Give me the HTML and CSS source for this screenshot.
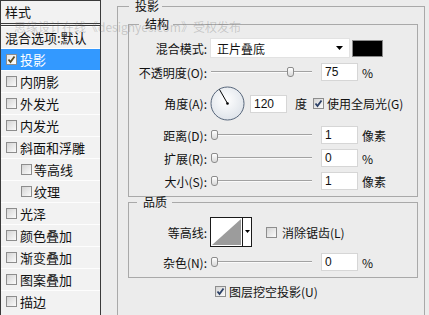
FILE: index.html
```html
<!DOCTYPE html>
<html lang="zh-CN">
<head>
<meta charset="utf-8">
<title>图层样式</title>
<link rel="stylesheet" href="styles.css">
</head>
<body>
<div class="dialog">
  <aside class="styles-list">
    <div class="list-head">样式</div>
    <div class="list-item plain">混合选项:默认</div>
    <div class="list-item selected"><span class="cb"><svg width="9" height="9" viewBox="0 0 9 9"><path d="M1.5 4.5 L3.5 7 L7.5 1.5" fill="none" stroke="#5a4a20" stroke-width="1.8"/></svg></span>投影</div>
    <div class="list-item"><span class="cb"></span>内阴影</div>
    <div class="list-item"><span class="cb"></span>外发光</div>
    <div class="list-item"><span class="cb"></span>内发光</div>
    <div class="list-item"><span class="cb"></span>斜面和浮雕</div>
    <div class="list-item sub"><span class="cb"></span>等高线</div>
    <div class="list-item sub"><span class="cb"></span>纹理</div>
    <div class="list-item"><span class="cb"></span>光泽</div>
    <div class="list-item"><span class="cb"></span>颜色叠加</div>
    <div class="list-item"><span class="cb"></span>渐变叠加</div>
    <div class="list-item"><span class="cb"></span>图案叠加</div>
    <div class="list-item"><span class="cb"></span>描边</div>
  </aside>

  <main class="panel">
    <fieldset class="group outer">
      <legend>投影</legend>

      <fieldset class="group inner structure">
        <legend>结构</legend>
        <div class="rows">
          <div class="row">
            <span class="lbl">混合模式:</span>
            <div class="select"><span>正片叠底</span><svg width="7" height="4" viewBox="0 0 7 4"><path d="M0 0 H7 L3.5 4 Z" fill="#000"/></svg></div>
            <span class="swatch"></span>
          </div>
          <div class="row">
            <span class="lbl">不透明度(O):</span>
            <div class="slider"><span class="track fill" style="width:75%"></span><span class="thumb"></span><span class="track rest"></span></div>
            <span class="num">75</span>
            <span class="unit">%</span>
          </div>
          <div class="row">
            <span class="lbl">角度(A):</span>
            <svg class="dial" width="35" height="35" viewBox="0 0 35 35">
              <defs>
                <radialGradient id="dialfill" cx="45%" cy="40%" r="60%">
                  <stop offset="0" stop-color="#ffffff"/>
                  <stop offset="1" stop-color="#dfe4ea"/>
                </radialGradient>
              </defs>
              <circle cx="17.5" cy="17.5" r="16.5" fill="url(#dialfill)" stroke="#56657a" stroke-width="1"/>
              <line x1="17.5" y1="17.5" x2="9.5" y2="3.5" stroke="#000" stroke-width="1"/>
              <circle cx="17.5" cy="17.5" r="1.3" fill="#000"/>
            </svg>
            <span class="num angle">120</span>
            <span class="deg">度</span>
            <span class="cb global"><svg width="9" height="9" viewBox="0 0 9 9"><path d="M1.5 4.5 L3.5 7 L7.5 1.5" fill="none" stroke="#2a3f66" stroke-width="1.8"/></svg></span>
            <span class="check-label">使用全局光(G)</span>
          </div>
          <div class="row">
            <span class="lbl">距离(D):</span>
            <div class="slider"><span class="track fill" style="width:0%"></span><span class="thumb"></span><span class="track rest"></span></div>
            <span class="num">1</span>
            <span class="unit">像素</span>
          </div>
          <div class="row">
            <span class="lbl">扩展(R):</span>
            <div class="slider"><span class="track fill" style="width:0%"></span><span class="thumb"></span><span class="track rest"></span></div>
            <span class="num">0</span>
            <span class="unit">%</span>
          </div>
          <div class="row">
            <span class="lbl">大小(S):</span>
            <div class="slider"><span class="track fill" style="width:0%"></span><span class="thumb"></span><span class="track rest"></span></div>
            <span class="num">1</span>
            <span class="unit">像素</span>
          </div>
        </div>
      </fieldset>

      <fieldset class="group inner quality">
        <legend>品质</legend>
        <div class="rows">
          <div class="row">
            <span class="lbl">等高线:</span>
            <svg class="contour" width="42" height="30" viewBox="0 0 42 30">
              <rect x="0.5" y="0.5" width="41" height="29" fill="#fff" stroke="#1a1a1a"/>
              <path d="M2 28 L31 2 L31 28 Z" fill="#9c9c9c"/>
              <line x1="32.5" y1="1" x2="32.5" y2="29" stroke="#1a1a1a"/>
              <path d="M35 13 H40 L37.5 16 Z" fill="#000"/>
            </svg>
            <span class="cb anti"></span>
            <span class="check-label anti-label">消除锯齿(L)</span>
          </div>
          <div class="row">
            <span class="lbl">杂色(N):</span>
            <div class="slider"><span class="track fill" style="width:0%"></span><span class="thumb"></span><span class="track rest"></span></div>
            <span class="num">0</span>
            <span class="unit">%</span>
          </div>
        </div>
      </fieldset>

      <div class="knockout">
        <span class="cb"><svg width="9" height="9" viewBox="0 0 9 9"><path d="M1.5 4.5 L3.5 7 L7.5 1.5" fill="none" stroke="#2a3f66" stroke-width="1.8"/></svg></span>
        <span class="check-label">图层挖空投影(U)</span>
      </div>
    </fieldset>
  </main>
</div>
<div class="watermark">思缘设计在线《designyes.com》受权发布</div>
</body>
</html>
```

FILE: styles.css
```css
* {
  box-sizing: border-box;
}

html,
body {
  margin: 0;
  padding: 0;
}

body {
  width: 429px;
  height: 315px;
  overflow: hidden;
  position: relative;
  background: #ececec;
  color: #111;
  font-family: "Noto Sans CJK SC", "Liberation Sans", sans-serif;
  font-size: 12px;
}

.dialog {
  display: flex;
  height: 315px;
  overflow: hidden;
}

/* ---------- left style list ---------- */
.styles-list {
  flex: none;
  width: 101px;
  height: 315px;
  background: #f2f2f2;
  border: 1px solid #3a3a3a;
  border-bottom: none;
  font-size: 13px;
}

.list-head {
  height: 25px;
  padding-left: 4px;
  line-height: 22px;
  border-bottom: 3px double #3a3a3a;
}

.list-item {
  display: flex;
  align-items: center;
  height: 22px;
  padding-left: 5px;
  border-top: 1px solid #fdfdfd;
  white-space: nowrap;
}

.list-item.plain {
  padding-left: 4px;
}

.list-item.selected {
  background: #3399ff;
  color: #fff;
}

.list-item.sub {
  padding-left: 20px;
}

.list-item .cb {
  margin-right: 3px;
}

.list-item.sub .cb {
  margin-right: 2px;
}

/* ---------- checkbox ---------- */
.cb {
  flex: none;
  display: inline-flex;
  align-items: center;
  justify-content: center;
  width: 11px;
  height: 11px;
  border: 1px solid #8d8d8d;
  background: linear-gradient(135deg, #d4d4d4, #fbfbfb);
}

.selected .cb {
  background: linear-gradient(135deg, #e8e8e8, #ffffff);
}

.cb svg {
  display: block;
}

/* ---------- right panel ---------- */
.panel {
  margin-left: 16px;
  height: 315px;
}

fieldset.group {
  margin: 0;
  min-width: 0;
  border: 1px solid #a9a9a9;
}

fieldset.group > legend {
  padding: 0;
  line-height: 10px;
  font-size: 12px;
}

.outer {
  width: 308px;
  height: 317px;
  padding: 7px 6px 0 10px;
}

.outer > legend {
  margin-left: 1px;
  padding: 0 3px 0 6px !important;
  line-height: 12px !important;
}

.inner {
  width: 290px;
}

.structure {
  padding: 9px 0 6px 0;
}

.structure > legend {
  margin-left: 10px;
  padding: 0 4px 0 6px !important;
}

.quality {
  margin-top: 11px;
  padding: 10px 0 6px 0;
}

.quality > legend {
  margin-left: 8px;
  padding: 0 5px 0 6px !important;
}

.rows {
  display: flex;
  flex-direction: column;
  gap: 5px;
}

.quality .rows {
  gap: 6px;
}

.row {
  display: flex;
  align-items: center;
  white-space: nowrap;
}

.lbl {
  flex: none;
  width: 78px;
  text-align: right;
}

.select {
  flex: none;
  display: flex;
  align-items: center;
  justify-content: space-between;
  margin-left: 3px;
  width: 140px;
  height: 20px;
  padding: 0 6px 0 6px;
  background: #fff;
  border: 1px solid #e2e2e2;
}

.select svg {
  display: block;
}

.swatch {
  flex: none;
  margin-left: 2px;
  width: 31px;
  height: 17px;
  background: #000;
  border: 1px solid #8a8a8a;
}

.slider {
  flex: none;
  display: flex;
  align-items: center;
  margin-left: 4px;
  width: 101px;
  height: 12px;
}

.track {
  height: 2px;
  border-top: 1px solid #a2a2a2;
  border-bottom: 1px solid #fafafa;
}

.track.fill {
  flex: none;
}

.track.rest {
  flex: 1;
}

.thumb {
  flex: none;
  width: 7px;
  height: 10px;
  border: 1px solid #8c8c8c;
  border-radius: 2px 2px 3px 3px;
  background: linear-gradient(#ffffff, #d8d8d8);
}

.num {
  flex: none;
  margin-left: 9px;
  width: 37px;
  height: 18px;
  padding-left: 3px;
  background: #fff;
  border: 1px solid #d6d6d6;
  font-family: "Liberation Sans", sans-serif;
  font-size: 12px;
  line-height: 16px;
}

.unit {
  margin-left: 4px;
}

.dial {
  flex: none;
  display: block;
  margin-left: 3px;
}

.num.angle {
  margin-left: 5px;
}

.deg {
  margin-left: 8px;
}

.cb.global {
  margin-left: 6px;
}

.check-label {
  margin-left: 3px;
}

.contour {
  flex: none;
  display: block;
  margin-left: 3px;
}

.cb.anti {
  margin-left: 14px;
}

.anti-label {
  margin-left: 5px;
}

.knockout {
  display: flex;
  align-items: center;
  height: 12px;
  margin-top: 7px;
  padding-left: 87px;
  white-space: nowrap;
}

/* ---------- watermark overlay ---------- */
.watermark {
  position: absolute;
  top: 20px;
  left: 14px;
  line-height: 14px;
  font-size: 12px;
  white-space: nowrap;
  color: rgba(110, 110, 110, 0.3);
  pointer-events: none;
}
```
